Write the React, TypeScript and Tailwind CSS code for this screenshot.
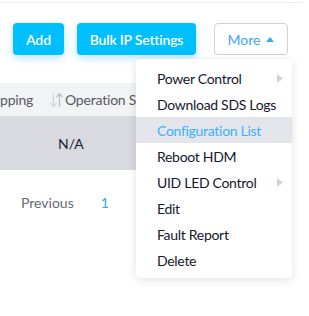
import React from "react";

const items = [
  { label: "Power Control", sub: true },
  { label: "Download SDS Logs" },
  { label: "Configuration List", active: true },
  { label: "Reboot HDM" },
  { label: "UID LED Control", sub: true },
  { label: "Edit" },
  { label: "Fault Report" },
  { label: "Delete" },
];

export default function App() {
  return (
    <div
      className="relative w-[309px] h-[316px] bg-white overflow-hidden text-[#1b1d33]"
      style={{ fontFamily: "Lato, 'Noto Sans', sans-serif" }}
    >
      <div className="h-[2px]" />
      <div className="w-[302px] h-[1px] bg-[#ececf9]" />
      <div className="flex items-center pl-[13px] pt-[20px]">
        <button className="w-[51px] h-[32px] rounded-[4px] bg-[#00bfff] text-white text-[14px] font-semibold shadow-[0_3px_8px_rgba(0,170,255,0.3)]">
          Add
        </button>
        <button className="ml-[13px] w-[119px] h-[32px] rounded-[4px] bg-[#00bfff] text-white text-[14px] font-semibold tracking-[-0.2px] shadow-[0_3px_8px_rgba(0,170,255,0.3)]">
          Bulk IP Settings
        </button>
        <button className="ml-[18px] w-[74px] h-[32px] rounded-[4px] bg-white border border-[#cfd0d6] text-[#3aa8ff] text-[14px] flex items-center justify-center gap-[6px]">
          More
          <svg width="8" height="5" viewBox="0 0 8 5">
            <path d="M0 5 L4 0 L8 5 Z" fill="#3aa8ff" />
          </svg>
        </button>
      </div>
      <div className="mt-[28px] w-[292px]">
        <div className="h-[33px] bg-[#f2f3f5] flex items-center text-[14px] text-[#555a66] tracking-[-0.2px]">
          <span className="w-[50px]">pping</span>
          <svg width="13" height="16" viewBox="0 0 13 16" className="shrink-0">
            <path d="M3.5 1 V14 M0.5 11 L3.5 14.5 L6.5 11" stroke="#d4d5da" strokeWidth="1.3" fill="none" />
            <path d="M9.5 15 V2 M6.5 5 L9.5 1.5 L12.5 5" stroke="#bfc1c7" strokeWidth="1.3" fill="none" />
          </svg>
          <span className="ml-[2px] w-[71px] overflow-hidden whitespace-nowrap">Operation Status</span>
        </div>
        <div className="h-[54px] bg-[#d8dadf] flex items-center text-[14px]">
          <span className="ml-[58px]">N/A</span>
        </div>
      </div>
      <div className="mt-[22px] w-[136px] overflow-hidden flex items-center text-[14px] whitespace-nowrap">
        <span className="ml-[21px] text-[#666a73]">Previous</span>
        <span className="ml-[27px] text-[#1ea7ff]">1</span>
        <span className="ml-[27px] text-[#666a73]">Next</span>
      </div>

      <div className="absolute left-[136px] top-[59px] w-[156px] h-[219px] bg-white rounded-[4px] shadow-[0_2px_10px_rgba(0,0,0,0.12)] pt-[6px]">
        {items.map((it) => (
          <div
            key={it.label}
            className={`relative h-[26px] flex items-center pl-[21px] text-[14px] tracking-[-0.3px] whitespace-nowrap ${
              it.active ? "bg-[#e4e5ea] text-[#38b3ff]" : "text-[#14172e]"
            }`}
          >
            {it.label}
            {it.sub && (
              <svg
                width="6"
                height="9"
                viewBox="0 0 6 9"
                className="absolute right-[9px] top-[9px]"
              >
                <path d="M0 0 L6 4.5 L0 9 Z" fill="#d2d3d8" />
              </svg>
            )}
          </div>
        ))}
      </div>
    </div>
  );
}
